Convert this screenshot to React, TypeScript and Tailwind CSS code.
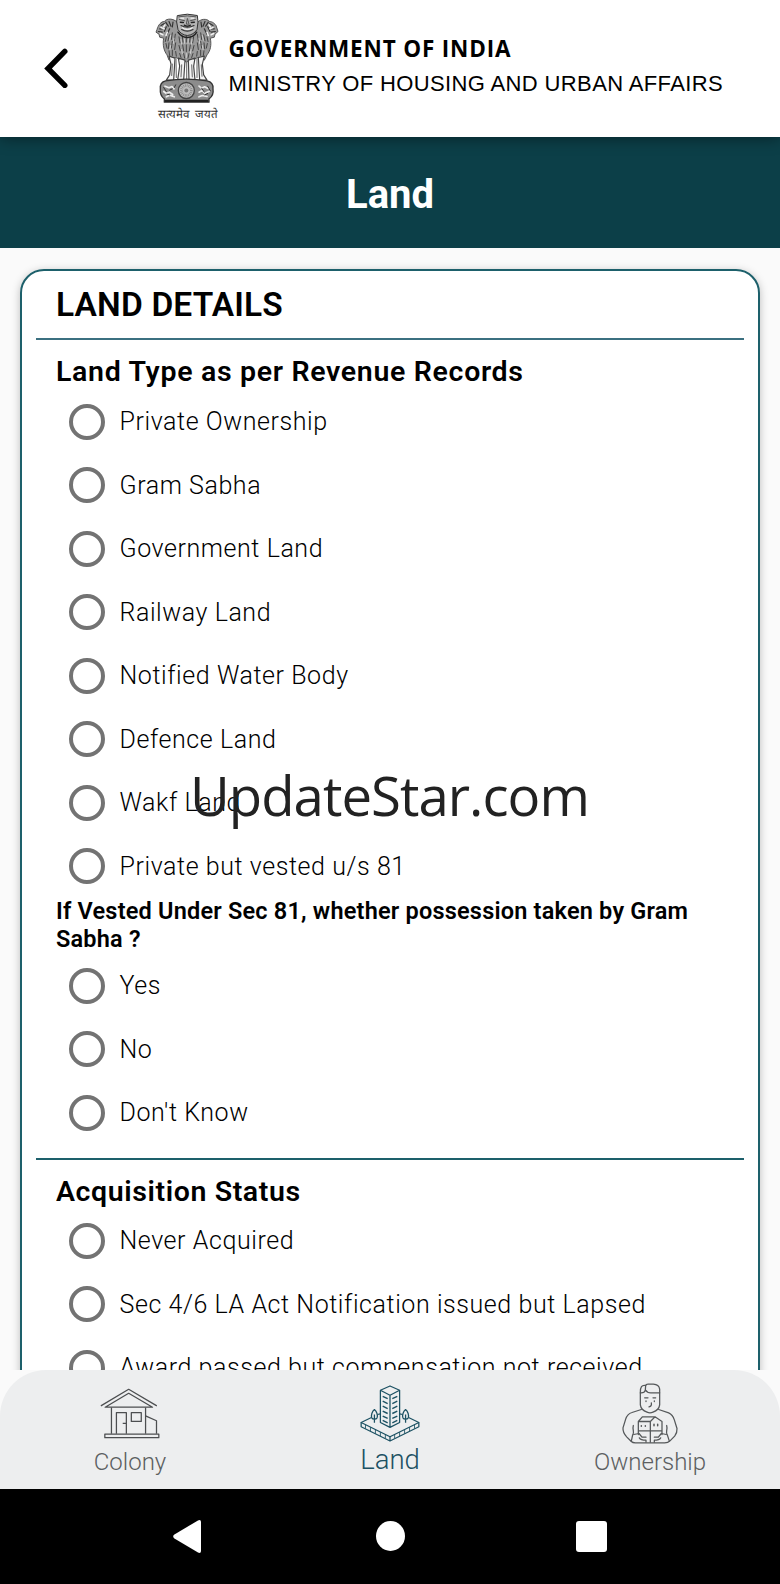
import { useState } from 'react';

const LAND_TYPES = [
    'Private Ownership',
    'Gram Sabha',
    'Government Land',
    'Railway Land',
    'Notified Water Body',
    'Defence Land',
    'Wakf Land',
    'Private but vested u/s 81',
];

const POSSESSION = ['Yes', 'No', "Don't Know"];

const ACQUISITION = [
    'Never Acquired',
    'Sec 4/6 LA Act Notification issued but Lapsed',
    'Award passed but compensation not received',
];

function Emblem() {
    return (
        <svg viewBox="30 22 192 275" className="w-16 h-[92px]" fill="none" strokeLinecap="round" strokeLinejoin="round">
            {/* side lions and manes */}
            <path
                d="M97 52 C84 40 66 40 58 50 C48 50 40 60 36 74 L33 82 L42 88 L44 97 L56 100 C52 122 58 140 66 150 L72 166 L92 158 L108 164 L124 172 L142 164 L160 158 L178 166 L186 150 C196 138 200 122 196 100 L208 97 L210 88 L219 80 L213 62 C206 52 198 50 194 50 C184 40 168 42 158 52 Z"
                fill="#999"
                stroke="#555"
                strokeWidth="3"
            />
            <path
                d="M48 62 l10 -6 M44 72 l8 0 M40 80 l12 2 M62 52 l8 12 M72 50 l6 14 M84 52 l-2 14 M64 66 l-6 14 M74 72 l-8 16 M204 62 l-10 -6 M208 72 l-9 0 M211 80 l-12 2 M190 52 l-8 12 M180 50 l-6 14 M168 52 l2 14 M188 66 l7 14 M178 72 l8 16"
                stroke="#333"
                strokeWidth="3.5"
            />
            <path d="M48 68 l10 4 M46 86 l8 4 M60 60 l-4 6 M204 68 l-10 4 M206 86 l-8 4 M192 60 l4 6 M67 82 l-4 10 M186 82 l4 10" stroke="#f3f3f3" strokeWidth="4.5" />
            <path
                d="M64 96 l-3 14 M73 90 l-4 18 M82 84 l-3 20 M91 88 l-3 20 M63 116 l3 14 M72 114 l-2 18 M82 110 l-3 20 M92 114 l-3 20 M72 138 l2 14 M82 136 l0 16 M92 140 l2 14 M102 96 l3 18 M112 94 l2 18 M124 92 l0 20 M136 94 l-2 18 M146 96 l-3 18 M102 122 l4 16 M113 120 l3 18 M124 120 l0 20 M136 120 l-3 18 M147 122 l-4 16 M104 146 l4 12 M116 146 l3 14 M132 146 l-3 14 M144 146 l-4 12 M157 88 l3 20 M167 84 l3 20 M176 90 l4 18 M186 96 l3 14 M157 114 l3 20 M167 110 l3 20 M177 114 l2 18 M187 116 l-3 14 M157 140 l-2 14 M167 136 l0 16 M177 138 l-2 14"
                stroke="#444"
                strokeWidth="3"
            />
            <path
                d="M77 92 l-3 14 M87 100 l-2 16 M77 122 l-2 12 M108 104 l2 14 M118 102 l1 14 M130 102 l-1 14 M141 104 l-2 14 M110 134 l2 12 M124 146 l0 12 M138 134 l-2 12 M162 100 l2 16 M172 92 l3 14 M172 122 l2 12"
                stroke="#d8d8d8"
                strokeWidth="2.5"
            />
            {/* front head */}
            <path d="M98 32 Q127 24 157 32 L159 52 L156 74 Q146 90 127 92 Q108 90 99 74 L95 52 Z" fill="#b4b4b4" stroke="#333" strokeWidth="3" />
            <path d="M101 36 Q127 30 153 36 M103 44 l16 4 M151 44 l-16 4 M127 42 l-3 16 h7 z" stroke="#555" strokeWidth="3" />
            <path d="M106 52 l9 1 M139 53 l9 -1 M118 61 Q127 67 136 61" stroke="#222" strokeWidth="4.5" />
            <path d="M108 62 Q127 72 147 62 M110 74 Q127 84 144 74" stroke="#333" strokeWidth="3.5" />
            <path d="M112 69 Q127 79 142 69 M107 40 h9 M138 40 h9" stroke="#fff" strokeWidth="3" />
            <path d="M99 82 Q110 98 127 98 Q146 98 155 82" stroke="#222" strokeWidth="4.5" />
            {/* legs */}
            <path
                d="M72 154 L78 178 L74 210 L64 226 L86 226 L90 160 Z M100 160 L104 184 L98 226 L116 226 L120 166 Z M130 166 L132 226 L150 226 L146 184 L150 160 Z M160 158 L164 226 L186 226 L176 210 L172 178 L178 154 Z"
                fill="#f4f4f4"
                stroke="#444"
                strokeWidth="3.5"
            />
            <path d="M93 162 l1 56 M125 170 l0 54 M156 162 l0 56 M82 178 l-2 34 M110 180 l-2 36 M140 180 l2 36 M169 180 l2 34" stroke="#777" strokeWidth="3.5" />
            {/* abacus with the wheel */}
            <path
                d="M62 228 Q44 232 46 252 Q44 272 58 282 L58 292 L192 292 L192 282 Q207 272 204 252 Q206 232 186 228 Q124 218 62 228 Z"
                fill="#8c8c8c"
                stroke="#333"
                strokeWidth="4"
            />
            <path
                d="M60 244 l12 5 l9 -4 l6 7 M56 260 l8 6 l9 -4 l10 7 M64 276 l10 -5 l14 5 M162 244 l7 6 l10 -4 l10 5 M162 262 l9 -5 l8 8 l14 -6 M162 276 l10 -4 l14 3"
                stroke="#ececec"
                strokeWidth="5"
            />
            <path d="M56 248 l8 12 M74 256 l8 -4 M92 240 l-4 8 M170 250 l8 12 M188 244 l8 14 M66 268 l8 2 M180 270 l8 -4" stroke="#333" strokeWidth="3" />
            <circle cx="124" cy="257" r="24" fill="#bdbdbd" stroke="#444" strokeWidth="4" />
            <circle cx="124" cy="257" r="15" stroke="#8a8a8a" strokeWidth="8" strokeDasharray="2.5 2.5" strokeLinecap="butt" />
            <circle cx="124" cy="257" r="6" fill="#777" />
            <path d="M60 288 H190" stroke="#222" strokeWidth="7" strokeLinecap="butt" />
        </svg>
    );
}

function ColonyIcon() {
    return (
        <svg viewBox="297 140 186 160" className="w-[62px] h-[53px]" fill="none" stroke="#4c4e50" strokeWidth="3.8" strokeLinejoin="round">
            <path d="M302 197 L386 147 L471 197 M315 201 L386 159 L458 201 Z" />
            <path d="M334 202 V281 M437 202 V281 M349 281 V217 H379 V281 M379 250 H368" />
            <path d="M394 217 H424 V244 H394 Z M437 227 L470 242 V281" />
            <path d="M314 282 H477 V293 H314 Z" />
        </svg>
    );
}

function LandIcon() {
    return (
        <svg viewBox="297 130 186 178" className="w-[62px] h-[59px]" fill="none" stroke="#1c5163" strokeWidth="3.8" strokeLinejoin="round">
            <path d="M361 149 L390 136 L419 149 L390 164 Z M361 149 V246 L390 261 L419 246 V149 M390 164 V261" />
            <path
                d="M368 167 l15 7 M368 182 l15 7 M368 197 l15 7 M368 212 l15 7 M368 227 l15 7 M368 240 l15 7 M397 174 l15 -7 M397 189 l15 -7 M397 204 l15 -7 M397 219 l15 -7 M397 234 l15 -7 M397 247 l15 -7"
                strokeWidth="4.2"
            />
            <path d="M361 220 L352 222 M334 231 L303 246 L390 289 L477 246 L446 231 M419 220 L428 222" />
            <path d="M303 246 V259 L390 302 L477 259 V246 M390 289 V302" />
            <path d="M316 253 v12 M331 260 v12 M346 268 v12 M361 275 v12 M376 282 v12 M404 282 v12 M419 275 v12 M434 268 v12 M449 260 v12 M464 253 v12" strokeWidth="2.6" />
            <path d="M343 207 C336 212 332 226 335 232 C338 237 348 237 351 232 C354 226 350 212 343 207 Z M343 222 V247" />
            <path d="M437 207 C430 212 426 226 429 232 C432 237 442 237 445 232 C448 226 444 212 437 207 Z M437 222 V247" />
        </svg>
    );
}

function OwnershipIcon() {
    return (
        <svg viewBox="303 125 174 188" className="w-[58px] h-[63px]" fill="none" stroke="#55585a" strokeWidth="3.8" strokeLinejoin="round" strokeLinecap="round">
            <path d="M361 157 V193 Q363 208 381 215 Q390 219 399 215 Q417 208 419 193 V146 Q417 132 400 131 H384 Q378 131 377 135 C366 132 360 140 361 157 Z" />
            <path d="M361 157 Q374 158 376 148 L377 135 M376 148 Q382 157 392 157 H419" />
            <path d="M374 172 h10 M399 172 h8 M378 181 v2 M403 181 v2 M394 187 Q396 197 387 199" />
            <path d="M364 207 L336 216 Q322 220 317 236 L309 262 Q308 276 320 289 L334 303 Q338 307 346 307 H434 Q444 307 450 301 L464 287 Q472 277 471 264 L463 238 Q458 222 446 217 L416 207" />
            <path d="M340 255 C336 268 345 276 338 283 L334 302 M440 255 C444 268 435 276 442 283 L448 302" />
            <path d="M355 243 L367 229 H405 L426 243 V282 M355 243 V282 M355 243 H391 L405 229 M391 243 V305 M355 271 H426" />
            <path d="M364 256 v1 M376 256 v1 M402 251 v5 M413 251 v5" strokeWidth="4.5" />
            <path d="M341 282 L357 279 L366 290 H378 M358 292 Q362 299 378 299 V305 M439 282 L424 279 L415 290 H403 M422 292 Q418 299 403 299 V305" />
        </svg>
    );
}

function Options({ name, items }: { name: string; items: string[] }) {
    const [selected, setSelected] = useState('');

    return (
        <div>
            {items.map(item => (
                <label key={item} className="flex h-[63.5px] items-center pl-[33px] cursor-pointer">
                    <input
                        type="radio"
                        name={name}
                        className="size-9 shrink-0 appearance-none rounded-full border-4 border-[#737373] checked:border-[10px]"
                        checked={selected === item}
                        onChange={() => setSelected(item)}
                    />
                    <span className="ml-[14.5px] whitespace-nowrap text-[25px] leading-none font-light tracking-[0.57px] text-black">{item}</span>
                </label>
            ))}
        </div>
    );
}

const TABS = [
    { label: 'Colony', icon: <ColonyIcon />, active: false },
    { label: 'Land', icon: <LandIcon />, active: true },
    { label: 'Ownership', icon: <OwnershipIcon />, active: false },
];

export default function App() {
    return (
        <div className="relative flex h-[1584px] w-[780px] flex-col overflow-hidden bg-[#fafafa] font-['Roboto',sans-serif] text-black">
            <header className="relative z-10 flex h-[137px] shrink-0 bg-white shadow-[0_2px_14px_rgba(0,0,0,0.4)]">
                <button className="ml-[43px] mt-12 h-10 w-[25px]" aria-label="Back">
                    <svg viewBox="0 0 25 40" className="h-10 w-[25px]" fill="none" stroke="#000" strokeWidth="5.4" strokeLinecap="round" strokeLinejoin="miter">
                        <path d="M21.8 3.4 L5 20.5 L21.8 37.4" />
                    </svg>
                </button>
                <div className="ml-[87px] mt-[12px] flex w-16 flex-col items-center">
                    <Emblem />
                    <span className="mt-[3px] ml-0.5 whitespace-nowrap text-[11.5px] leading-[14px] [word-spacing:3px] text-[#333]">सत्यमेव जयते</span>
                </div>
                <div className="ml-[9.5px] mt-8 whitespace-nowrap">
                    <p className="font-['Open_Sans',sans-serif] text-[22.5px] leading-[34px] font-bold tracking-[0.83px]">GOVERNMENT OF INDIA</p>
                    <p className="mt-px font-['Liberation_Sans',sans-serif] text-[22px] leading-[34px] tracking-[0.37px]">MINISTRY OF HOUSING AND URBAN AFFAIRS</p>
                </div>
            </header>

            <div className="flex h-[110.5px] shrink-0 items-center justify-center bg-[#0c3f48] pt-1.5">
                <h1 className="text-[40px] leading-none font-bold text-white">Land</h1>
            </div>

            <main className="min-h-0 flex-1 overflow-hidden px-5 pt-[21px]">
                <section className="h-[1400px] rounded-t-[24px] border-2 border-[#1d606b] bg-white px-3.5 shadow-[0_2px_8px_rgba(0,0,0,0.25)]">
                    <h2 className="h-[69px] border-b-2 border-[#3b7080] pt-3.5 pl-5 text-[33.5px] leading-[40px] font-semibold tracking-[0.15px]">LAND DETAILS</h2>
                    <h3 className="h-[50.5px] pt-4 pl-5 text-[28.5px] leading-8 font-semibold tracking-[0.68px]">Land Type as per Revenue Records</h3>
                    <Options name="landType" items={LAND_TYPES} />
                    <p className="h-[56px] pl-5 text-[23.5px] leading-[27.5px] font-semibold tracking-[0.2px]">
                        If Vested Under Sec 81, whether possession taken by Gram
                        <br />
                        Sabha ?
                    </p>
                    <Options name="possession" items={POSSESSION} />
                    <h3 className="mt-[13px] h-[51.5px] border-t-2 border-[#1d606b] pt-4 pl-5 text-[28.5px] leading-8 font-semibold tracking-[0.6px]">Acquisition Status</h3>
                    <Options name="acquisition" items={ACQUISITION} />
                </section>
            </main>

            <nav className="grid h-[119.5px] shrink-0 grid-cols-3 rounded-t-[46px] bg-[#edeeef]">
                {TABS.map(tab => (
                    <button key={tab.label} className="flex flex-col items-center pt-3">
                        <span className="flex h-[64px] items-center">{tab.icon}</span>
                        <span className={tab.active ? 'text-[27.5px] leading-[28px] font-light text-[#1c5163]' : 'mt-0.5 text-[24px] leading-[28px] font-light text-[#5c5f61]'}>{tab.label}</span>
                    </button>
                ))}
            </nav>

            {/* system navigation */}
            <div className="flex h-[95px] shrink-0 items-start bg-black pt-[31px]">
                <svg viewBox="0 0 28 33" className="ml-[173px] h-[33px] w-7" fill="#fff">
                    <path d="M25 0.4 Q28 -0.6 28 2 V31 Q28 33.6 25 32.6 L1 18.2 Q-0.6 16.5 1 14.8 Z" />
                </svg>
                <span className="mt-px ml-[174.5px] h-[30px] w-[29px] rounded-[50%] bg-white" />
                <span className="mt-px ml-[171px] h-[31px] w-[31px] rounded-[3px] bg-white" />
            </div>

            <div className="pointer-events-none absolute top-[755px] left-[190px] whitespace-nowrap font-['Open_Sans',sans-serif] text-[54.5px] leading-[80px] tracking-[-0.95px] text-[#222]">UpdateStar.com</div>
        </div>
    );
}
